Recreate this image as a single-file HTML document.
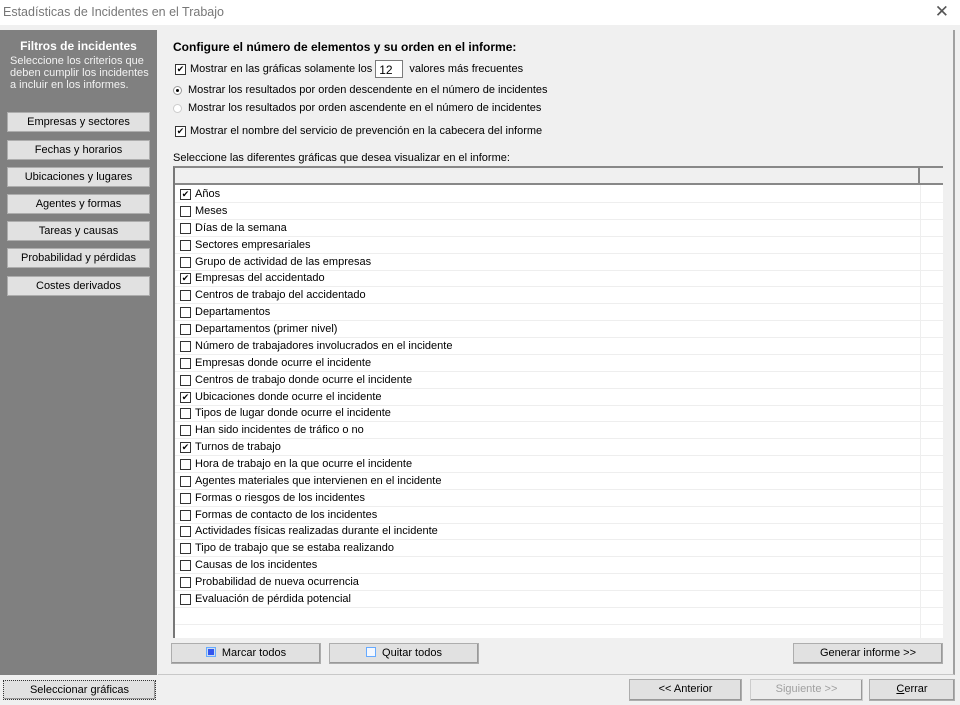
<!DOCTYPE html>
<html><head><meta charset="utf-8"><style>
*{margin:0;padding:0;box-sizing:border-box}
body{width:960px;height:705px;background:#f0f0f0;font-family:"Liberation Sans",sans-serif;font-size:11px;color:#000;position:relative;overflow:hidden}
.abs{position:absolute}
.title{left:0;top:0;width:960px;height:25px;background:#fff;color:#777;font-size:12.5px;padding:5px 0 0 3px}
.x{right:11px;top:2px;font-size:17px;color:#555;font-weight:300}
.left{left:0;top:30px;width:157px;height:645px;background:#808080;color:#fff}
.lbtn{position:absolute;left:7px;width:143px;height:20px;background:#e1e1e1;border:1px solid #adadad;color:#000;text-align:center;line-height:18px;font-size:11px}
.main{left:158px;top:30px;width:797px;height:645px;background:#f0f0f0;border-right:2px solid #a0a0a0;border-bottom:1px solid #c8c8c8}
.btn{position:absolute;background:#e1e1e1;border:1px solid #adadad;text-align:center;line-height:19px;font-size:11px;box-shadow:inset -1px -1px #999}
.ln{display:flex;align-items:center}
.cb{flex:none;display:inline-flex;align-items:center;justify-content:center;width:11px;height:11px;border:1px solid #333;background:#fff;margin-right:4px;font-size:9px;line-height:1}
.rd{flex:none;display:inline-block;width:9px;height:9px;border-radius:50%;border:1px solid #999;background:#fff;margin-right:6px;position:relative}
.row{position:absolute;left:0;width:768px;height:17px;border-bottom:1px solid #eee;padding:0 0 0 5px;font-size:11px;display:flex;align-items:center}
</style></head><body>
<div class="abs title">Estadísticas de Incidentes en el Trabajo</div>
<div class="abs x">✕</div>
<div class="abs left">
<div style="text-align:center;font-weight:bold;font-size:12px;margin-top:9px">Filtros de incidentes</div>
<div style="padding:2px 0 0 10px;font-size:11px;line-height:12px;color:#f2f2f2">Seleccione los criterios que<br>deben cumplir los incidentes<br>a incluir en los informes.</div>
<div class="lbtn" style="top:82px">Empresas y sectores</div>
<div class="lbtn" style="top:110px">Fechas y horarios</div>
<div class="lbtn" style="top:137px">Ubicaciones y lugares</div>
<div class="lbtn" style="top:164px">Agentes y formas</div>
<div class="lbtn" style="top:191px">Tareas y causas</div>
<div class="lbtn" style="top:218px">Probabilidad y pérdidas</div>
<div class="lbtn" style="top:246px">Costes derivados</div>
</div>
<div class="abs main"></div>
<div class="abs" style="left:173px;top:40px;font-weight:bold;font-size:12px">Configure el número de elementos y su orden en el informe:</div>
<div class="abs ln" style="left:175px;top:60px;height:18px"><span class="cb">✔</span>Mostrar en las gráficas solamente los&nbsp;<span style="display:inline-block;width:28px;height:18px;border:1px solid #7a7a7a;background:#fff;padding:2px 3px;font-size:12px">12</span>&nbsp;&nbsp;valores más frecuentes</div>
<div class="abs ln" style="left:173px;top:83px;height:14px"><span class="rd"><span style="position:absolute;left:2px;top:2px;width:3px;height:3px;border-radius:50%;background:#000"></span></span>Mostrar los resultados por orden descendente en el número de incidentes</div>
<div class="abs ln" style="left:173px;top:101px;height:14px"><span class="rd" style="border-color:#ccc"></span>Mostrar los resultados por orden ascendente en el número de incidentes</div>
<div class="abs ln" style="left:175px;top:124px;height:14px"><span class="cb">✔</span>Mostrar el nombre del servicio de prevención en la cabecera del informe</div>
<div class="abs" style="left:173px;top:152px">Seleccione las diferentes gráficas que desea visualizar en el informe:</div>
<div class="abs" style="left:173px;top:166px;width:770px;height:472px;background:#fff;border-left:2px solid #777;border-top:2px solid #888;overflow:hidden">
<div style="position:absolute;left:0;top:0;width:770px;height:17px;background:#f0f0f0;border-bottom:2px solid #888"></div>
<div style="position:absolute;left:743px;top:0;width:2px;height:17px;background:#888"></div>
<div style="position:absolute;left:745px;top:17px;width:1px;height:460px;background:#eee"></div>
<div style="position:absolute;top:18px;left:0">
<div class="row" style="top:0"><span class="cb">✔</span>Años</div>
<div class="row" style="top:17px"><span class="cb"></span>Meses</div>
<div class="row" style="top:34px"><span class="cb"></span>Días de la semana</div>
<div class="row" style="top:51px"><span class="cb"></span>Sectores empresariales</div>
<div class="row" style="top:68px"><span class="cb"></span>Grupo de actividad de las empresas</div>
<div class="row" style="top:84px"><span class="cb">✔</span>Empresas del accidentado</div>
<div class="row" style="top:101px"><span class="cb"></span>Centros de trabajo del accidentado</div>
<div class="row" style="top:118px"><span class="cb"></span>Departamentos</div>
<div class="row" style="top:135px"><span class="cb"></span>Departamentos (primer nivel)</div>
<div class="row" style="top:152px"><span class="cb"></span>Número de trabajadores involucrados en el incidente</div>
<div class="row" style="top:169px"><span class="cb"></span>Empresas donde ocurre el incidente</div>
<div class="row" style="top:186px"><span class="cb"></span>Centros de trabajo donde ocurre el incidente</div>
<div class="row" style="top:203px"><span class="cb">✔</span>Ubicaciones donde ocurre el incidente</div>
<div class="row" style="top:219px"><span class="cb"></span>Tipos de lugar donde ocurre el incidente</div>
<div class="row" style="top:236px"><span class="cb"></span>Han sido incidentes de tráfico o no</div>
<div class="row" style="top:253px"><span class="cb">✔</span>Turnos de trabajo</div>
<div class="row" style="top:270px"><span class="cb"></span>Hora de trabajo en la que ocurre el incidente</div>
<div class="row" style="top:287px"><span class="cb"></span>Agentes materiales que intervienen en el incidente</div>
<div class="row" style="top:304px"><span class="cb"></span>Formas o riesgos de los incidentes</div>
<div class="row" style="top:321px"><span class="cb"></span>Formas de contacto de los incidentes</div>
<div class="row" style="top:337px"><span class="cb"></span>Actividades físicas realizadas durante el incidente</div>
<div class="row" style="top:354px"><span class="cb"></span>Tipo de trabajo que se estaba realizando</div>
<div class="row" style="top:371px"><span class="cb"></span>Causas de los incidentes</div>
<div class="row" style="top:388px"><span class="cb"></span>Probabilidad de nueva ocurrencia</div>
<div class="row" style="top:405px"><span class="cb"></span>Evaluación de pérdida potencial</div>
<div class="row" style="top:422px"></div>
<div class="row" style="top:439px"></div>
</div>
</div>
<div class="btn" style="left:171px;top:643px;width:150px;height:21px"><span style="display:inline-block;width:10px;height:10px;border:1px solid #6af;background:#3355ee;box-shadow:inset 0 0 0 1px #cde;vertical-align:-1px;margin-right:6px"></span>Marcar todos</div>
<div class="btn" style="left:329px;top:643px;width:150px;height:21px"><span style="display:inline-block;width:10px;height:10px;border:1px solid #6af;background:#f4f8ff;vertical-align:-1px;margin-right:6px"></span>Quitar todos</div>
<div class="btn" style="left:793px;top:643px;width:150px;height:21px">Generar informe &gt;&gt;</div>
<div class="btn" style="left:3px;top:680px;width:153px;height:20px;border:1px dotted #333;line-height:18px">Seleccionar gráficas</div>
<div class="btn" style="left:629px;top:679px;width:113px;height:22px">&lt;&lt; Anterior</div>
<div class="btn" style="left:750px;top:679px;width:113px;height:22px;color:#a0a0a0;background:#ececec;border-color:#ccc">Siguiente &gt;&gt;</div>
<div class="btn" style="left:869px;top:679px;width:86px;height:22px"><u>C</u>errar</div>
</body></html>
